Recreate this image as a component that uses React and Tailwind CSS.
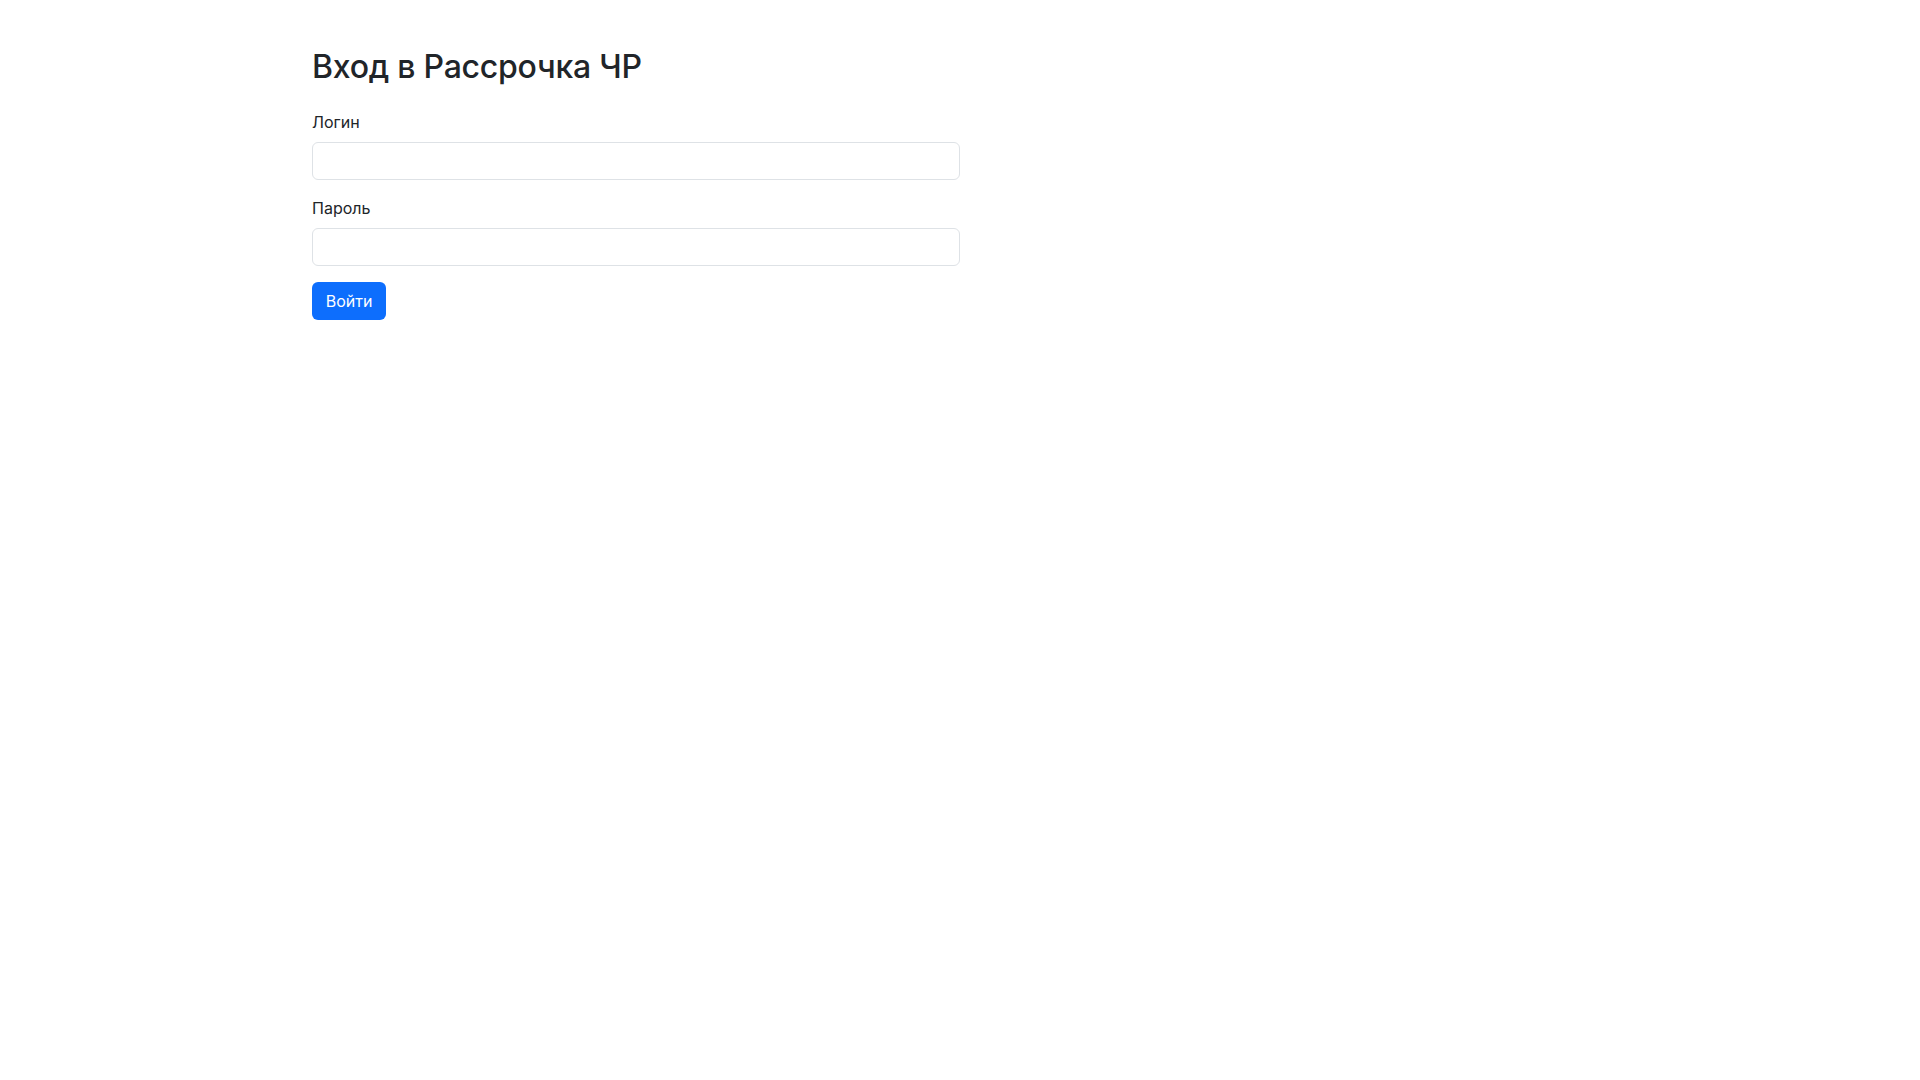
export default function App() {
  return (
    <div className="min-h-screen bg-white text-[#212529]" style={{ fontFamily: 'Inter, "Noto Sans", sans-serif' }}>
      <div className="mx-auto w-[1320px] px-3 pt-12">
        <h2 className="mb-6 text-[32px] font-medium leading-[1.2] tracking-[-0.25px]">Вход в Рассрочка ЧР</h2>
        <form className="w-[648px]" onSubmit={(e) => e.preventDefault()}>
          <div className="mb-4">
            <label className="mb-2 block text-base leading-6">Логин</label>
            <input type="text" className="block h-[38px] w-full rounded-[6px] border border-[#dee2e6] bg-white px-3 text-base outline-none" />
          </div>
          <div className="mb-4">
            <label className="mb-2 block text-base leading-6">Пароль</label>
            <input type="password" className="block h-[38px] w-full rounded-[6px] border border-[#dee2e6] bg-white px-3 text-base outline-none" />
          </div>
          <button type="submit" className="h-[38px] w-[74px] rounded-[6px] bg-[#0d6efd] text-center text-base leading-6 text-white">Войти</button>
        </form>
      </div>
    </div>
  );
}
